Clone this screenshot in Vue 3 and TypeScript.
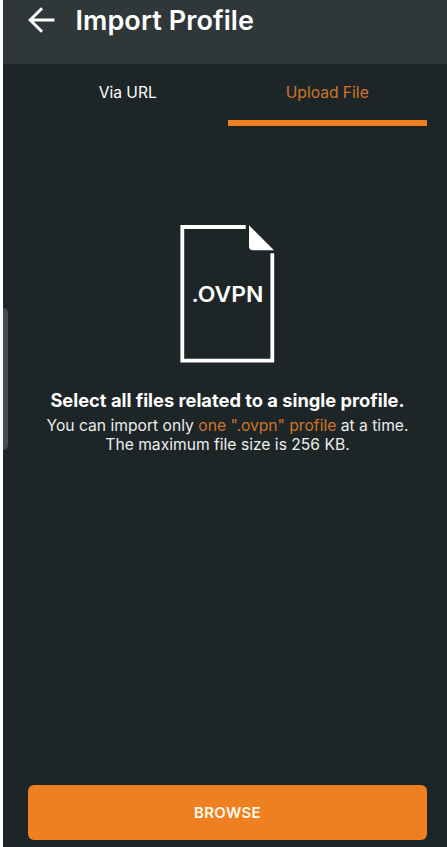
<script setup lang="ts">
import { ref } from 'vue'

type TabId = 'url' | 'file'

const tabs: { id: TabId; label: string }[] = [
  { id: 'url', label: 'Via URL' },
  { id: 'file', label: 'Upload File' },
]
const active = ref<TabId>('file')
</script>

<template>
  <div class="screen">
    <header class="bar">
      <button class="back" aria-label="Back">
        <svg width="28" height="28" viewBox="0 0 28 28" fill="none" stroke="#fff" stroke-width="3">
          <path d="M27.500 14H3.500M15 2.200 3.200 14l11.800 11.800" />
        </svg>
      </button>
      <h1 class="title">Import Profile</h1>
    </header>

    <nav class="tabs">
      <button
        v-for="tab in tabs"
        :key="tab.id"
        class="tab"
        :class="{ active: tab.id === active }"
        @click="active = tab.id"
      >
        {{ tab.label }}
      </button>
    </nav>

    <main class="content">
      <svg class="file" width="95" height="138" viewBox="0 0 95 138">
        <path d="M65.700 2H2.300v133.700h90V28.300" fill="none" stroke="#fff" stroke-width="3.800" />
        <path d="M69 0.300 94 25.300H73q-4 0-4-4z" fill="#fff" />
        <text x="11.500" y="77.300" textLength="72" lengthAdjust="spacingAndGlyphs" class="ext">.OVPN</text>
      </svg>
      <h2 class="headline">Select all files related to a single profile.</h2>
      <p class="note">
        You can import only <span class="accent">one ".ovpn" profile</span> at a time.<br />
        The maximum file size is 256 KB.
      </p>
    </main>

    <button class="browse">BROWSE</button>
    <div class="handle"></div>
  </div>
</template>

<style>
body {
  margin: 0;
  background: #fff;
}
</style>

<style scoped>
.screen {
  position: relative;
  box-sizing: border-box;
  height: 847px;
  margin-left: 3px;
  display: flex;
  flex-direction: column;
  overflow: hidden;
  background: #1e2526;
  color: #fff;
  font-family: Inter, sans-serif;
}
button {
  padding: 0;
  border: 0;
  background: none;
  color: inherit;
  font-family: inherit;
}
.bar {
  flex: none;
  height: 64px;
  box-sizing: border-box;
  display: flex;
  align-items: flex-start;
  padding: 6px 0 0 24px;
  background: #303738;
}
.back {
  width: 28px;
  height: 28px;
  display: block;
}
.back svg {
  display: block;
}
.title {
  margin: 0 0 0 20.5px;
  font-size: 27px;
  line-height: 30px;
  font-weight: 600;
  letter-spacing: 0.08px;
  white-space: nowrap;
}
.tabs {
  flex: none;
  display: flex;
  height: 62px;
  padding: 0 20px 0 25px;
}
.tab {
  flex: 1;
  box-sizing: border-box;
  padding-top: 2px;
  border-bottom: 6px solid transparent;
  font-size: 15.6px;
  line-height: 54px;
}
.tab.active {
  color: #ce7429;
  border-bottom-color: #ee8022;
}
.content {
  flex: 1;
  display: flex;
  flex-direction: column;
  align-items: center;
  padding: 99px 0 0 5px;
  text-align: center;
  white-space: nowrap;
}
.file {
  display: block;
  flex: none;
}
.ext {
  fill: #fff;
  font-size: 21.5px;
  font-weight: 600;
}
.headline {
  margin: 26px 0 0;
  font-size: 18.3px;
  line-height: 22px;
  font-weight: 700;
}
.note {
  margin: 5px 0 0;
  font-size: 15.65px;
  line-height: 19px;
  color: #eceded;
}
.accent {
  color: #ce7429;
}
.browse {
  flex: none;
  height: 55px;
  margin: 0 20px 7px 25px;
  border-radius: 6px;
  background: #ee8022;
  color: #fff8e8;
  font-size: 15px;
  font-weight: 600;
  letter-spacing: 0.3px;
}
.handle {
  position: absolute;
  left: 0;
  top: 308px;
  width: 5px;
  height: 142px;
  border-radius: 0 5px 5px 0;
  background: #484d4e;
}
</style>
